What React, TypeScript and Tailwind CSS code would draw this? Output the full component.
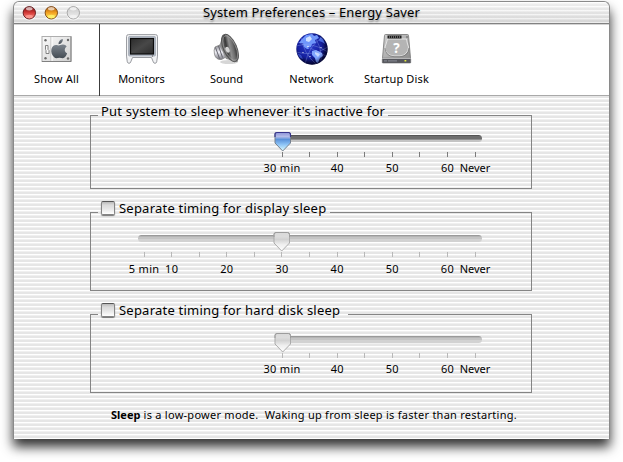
import type { ReactNode } from "react";

function TrafficLight({ id, dark, mid, light, rim }: { id: string; dark: string; mid: string; light: string; rim: string }) {
  return (
    <svg width="15" height="16" viewBox="0 0 15 16" className="block">
      <defs>
        <linearGradient id={id} x1="0" y1="0" x2="0" y2="1">
          <stop offset="0" stopColor={dark} />
          <stop offset="0.5" stopColor={mid} />
          <stop offset="1" stopColor={light} />
        </linearGradient>
      </defs>
      <circle cx="7.3" cy="8.6" r="6.9" fill="#fff" opacity="0.7" />
      <circle cx="7.3" cy="7.8" r="6.2" fill={`url(#${id})`} stroke={rim} strokeWidth="0.9" />
      <ellipse cx="7.3" cy="3.8" rx="3.3" ry="1.7" fill="#fff" opacity="0.65" />
      <ellipse cx="7.3" cy="11.5" rx="3.6" ry="1.7" fill={light} opacity="0.8" />
    </svg>
  );
}

function ShowAllIcon() {
  return (
    <svg width="32" height="34" viewBox="0 0 32 34">
      <defs>
        <linearGradient id="plate" x1="0" y1="0" x2="1" y2="1">
          <stop offset="0" stopColor="#fafafa" />
          <stop offset="1" stopColor="#cfcfcf" />
        </linearGradient>
        <linearGradient id="apple" x1="0" y1="0" x2="0" y2="1">
          <stop offset="0" stopColor="#7d858e" />
          <stop offset="1" stopColor="#434b53" />
        </linearGradient>
      </defs>
      <rect x="1" y="4.5" width="29" height="25" fill="url(#plate)" stroke="#aeaeae" />
      <path d="M1 29.500h29v-25" fill="none" stroke="#808080" />
      <path d="M10 5v24" stroke="#bdbdbd" />
      <path d="M11 5v24" stroke="#fff" />
      <g fill="#6a6a6a">
        <circle cx="4.500" cy="8.200" r="1.200" />
        <circle cx="4.500" cy="26.200" r="1.200" />
        <circle cx="27" cy="8" r="1.200" />
        <circle cx="27" cy="26.500" r="1.200" />
      </g>
      <path d="M4.500 13.500h2.500v4l1 1v3h-3v-3l-.5-1z" fill="#f8f8f8" stroke="#777" strokeWidth="0.9" />
      <g fill="url(#apple)" transform="translate(19.200 17) scale(1.180) translate(-21.600 -15.900)">
        <path d="M20.300 13c1-.1 2.200-1 3.700-.9 1.400.1 2.500.7 3.100 1.600-2.300 1.500-2.100 4.700.4 5.800-.5 1.500-1.300 2.800-2.300 3.700-1.400 1.200-2.500.2-4.200.2-1.700 0-2.900.9-4.300-.3-2-1.700-3.200-4.600-2.500-7.200.6-2.400 2.500-3.700 4.300-3.400.7.100 1.300.4 1.800.5z" />
        <path d="M20.200 11.900c-.2-2.200 1.500-4.100 3.600-4.400.3 2.300-1.500 4.300-3.600 4.400z" />
      </g>
    </svg>
  );
}

function MonitorIcon() {
  return (
    <svg width="34" height="34" viewBox="0 0 34 34">
      <defs>
        <linearGradient id="screen" x1="0" y1="0" x2="1" y2="1">
          <stop offset="0" stopColor="#2b2b2b" />
          <stop offset="0.5" stopColor="#484848" />
          <stop offset="1" stopColor="#2c2c2c" />
        </linearGradient>
      </defs>
      <path
        d="M3.500 2.600h27q2 0 2 2v19.500l-.8 5.800q-.4 1.400-1.700 1.400t-1.700-1.300l-1.800-4.500h-19l-1.800 4.500q-.4 1.300-1.700 1.300t-1.700-1.400l-.8-5.800v-19.500q0-2 2-2z"
        fill="#f1f2f4"
        stroke="#9b9da2"
        strokeWidth="1"
      />
      <rect x="3.500" y="4.500" width="27" height="19.500" rx="1" fill="#bac1cc" stroke="#99a1ac" strokeWidth="0.7" />
      <rect x="5.500" y="6.500" width="23" height="15.500" fill="url(#screen)" stroke="#0c0c0c" strokeWidth="1.200" />
      <circle cx="27.500" cy="24" r=".7" fill="#666" />
    </svg>
  );
}

function SoundIcon() {
  return (
    <svg width="34" height="34" viewBox="0 0 34 34">
      <defs>
        <linearGradient id="cone" x1="0.1" y1="0.2" x2="0.9" y2="0.6">
          <stop offset="0" stopColor="#6b6b6b" />
          <stop offset="0.3" stopColor="#3a3a3a" />
          <stop offset="0.55" stopColor="#8f8f8f" />
          <stop offset="0.8" stopColor="#6c6c6c" />
          <stop offset="1" stopColor="#3c3c3c" />
        </linearGradient>
        <linearGradient id="magnet" x1="0" y1="0" x2="0" y2="1">
          <stop offset="0" stopColor="#77777d" />
          <stop offset="0.5" stopColor="#f3f3fa" />
          <stop offset="1" stopColor="#77777f" />
        </linearGradient>
      </defs>
      <ellipse cx="19" cy="30" rx="9" ry="2" fill="#000" opacity="0.16" />
      <path d="M5 15l6-2.500 5 12.500-4.500 2.500q-5.500.5-7-5-1-4.500.5-7.500z" fill="url(#magnet)" stroke="#777" strokeWidth=".7" />
      <path d="M5.500 15.500l4 11M8.500 14l4 11.500" stroke="#65656d" strokeWidth="1" fill="none" />
      <path d="M9.500 13l3.500-10 15 27-12-3z" fill="#909090" />
      <ellipse cx="20" cy="16" rx="6.600" ry="14.600" transform="rotate(-24 20 16)" fill="url(#cone)" stroke="#555" strokeWidth="1" />
      <ellipse cx="20.200" cy="16" rx="5.600" ry="13.300" transform="rotate(-24 20.200 16)" fill="none" stroke="#adadad" strokeWidth=".6" />
      <ellipse cx="17.500" cy="17.800" rx="2" ry="3" transform="rotate(-24 17.500 17.800)" fill="#d4d4d4" />
    </svg>
  );
}

function NetworkIcon() {
  return (
    <svg width="34" height="34" viewBox="0 0 34 34">
      <defs>
        <radialGradient id="globe" cx="0.42" cy="0.4" r="0.62">
          <stop offset="0" stopColor="#2b3ccc" />
          <stop offset="0.6" stopColor="#1520a0" />
          <stop offset="1" stopColor="#03042e" />
        </radialGradient>
        <radialGradient id="globeShade" cx="0.45" cy="0.42" r="0.58">
          <stop offset="0.7" stopColor="#03042e" stopOpacity="0" />
          <stop offset="1" stopColor="#03042e" stopOpacity="0.6" />
        </radialGradient>
        <clipPath id="globeClip">
          <circle cx="17" cy="17" r="15.500" />
        </clipPath>
      </defs>
      <circle cx="17" cy="17" r="15.700" fill="url(#globe)" />
      <g clipPath="url(#globeClip)">
        <path d="M7 7l4-4 6-1 2 2 3-1 2 3-4 2 1 3-4 1-1 3-3 0 1 2-2 0-3-2-1-4-4 0z" fill="#6f96fb" />
        <path d="M11 6l4-2 2 3-3 3-3-1z" fill="#cfe0ff" />
        <path d="M17 19l4-1 6 3 1 3-3 2-2 5-2-1-1-4-3-3z" fill="#7ea4ff" />
        <path d="M20 20l3 1 2 1-2 3-3-3z" fill="#c6d9ff" />
        <path d="M25 5l3 2 2 5-3-2-3-1z" fill="#4767dd" />
        <path d="M2 21l4 2 2 4-3-1z" fill="#364fd2" />
        <g fill="none" stroke="#9db3f4" strokeWidth=".5" opacity=".65">
          <path d="M1 14q15-5 32 6M1 20q16 5 32-5M6 5q2 16 16 28M28 5q-14 8-18 27M3 10l28 14M16 1q12 12 10 30" />
        </g>
        <g fill="#fff">
          <circle cx="13" cy="14.500" r=".7" />
          <circle cx="26" cy="15.500" r=".6" />
          <circle cx="8" cy="20.500" r=".6" />
          <circle cx="15" cy="24.500" r=".6" />
        </g>
        <circle cx="17" cy="17" r="16" fill="url(#globeShade)" />
      </g>
    </svg>
  );
}

function DiskIcon() {
  return (
    <svg width="34" height="34" viewBox="0 0 34 34">
      <defs>
        <linearGradient id="disk" x1="0" y1="0" x2="1" y2="1">
          <stop offset="0" stopColor="#d0d0d0" />
          <stop offset="0.5" stopColor="#b2b2b2" />
          <stop offset="1" stopColor="#8d8d8d" />
        </linearGradient>
      </defs>
      <path d="M4.500 3.500q0-1 1-1h22q1 0 1 1l2 22.500h-28z" fill="url(#disk)" stroke="#808080" strokeWidth=".9" />
      <path d="M7.500 7q-1 4-2.500 8 0 8 9 9h6q8-1 8.500-9-1.500-4-2-8z" fill="#b4b4b4" stroke="#e4e4e4" strokeWidth="1" />
      <path d="M5 16q.5 8 9 8.700h6q8.500-.7 9-8.700" fill="none" stroke="#707070" strokeWidth=".7" />
      <rect x="7.500" y="3.500" width="14" height="3" fill="#1d1d1d" />
      <path d="M9 5h11" stroke="#aaa" strokeDasharray="1 1" />
      <rect x="2.300" y="26.500" width="28.400" height="4.500" rx=".6" fill="#55565c" stroke="#66666a" strokeWidth=".6" />
      <path d="M4 28.800h3M8 28.800h9" stroke="#80828a" strokeWidth="1.300" />
      <path d="M2.500 26.300h28" stroke="#c6c6c6" strokeWidth="1" />
      <rect x="24.500" y="28" width="1.800" height="1.500" fill="#e1ea3c" />
      <circle cx="27" cy="5" r=".8" fill="#555" />
      <text x="16.500" y="21" textAnchor="middle" fontSize="13.500" fontWeight="700" fill="#fff" fontFamily="Noto Sans, sans-serif">
        ?
      </text>
    </svg>
  );
}

function ToolItem({ label, spacing, active, children }: { label: string; spacing: string; active?: boolean; children: ReactNode }) {
  return (
    <div className={`flex h-[72px] flex-col items-center pt-[8px] ${active ? "-mr-px w-[86px] border-r border-[#3c3c3c]" : "w-[85px]"}`}>
      <div className="flex h-[34px] items-center justify-center">{children}</div>
      <span className={`mt-[5px] whitespace-nowrap text-[11px] leading-4 ${spacing}`}>{label}</span>
    </div>
  );
}

function Thumb({ active, id }: { active?: boolean; id: string }) {
  return (
    <svg width="18" height="21" viewBox="0 0 18 21" className="absolute -top-[4px] left-[-9px]">
      <defs>
        <linearGradient id={id} x1="0" y1="0" x2="0" y2="1">
          <stop offset="0" stopColor={active ? "#8d93d8" : "#dadada"} />
          <stop offset="0.22" stopColor={active ? "#b3bbe8" : "#dcdcdc"} />
          <stop offset="0.38" stopColor={active ? "#5a92da" : "#d2d2d2"} />
          <stop offset="0.65" stopColor={active ? "#8ec4f6" : "#efefef"} />
          <stop offset="1" stopColor={active ? "#e0ffff" : "#ffffff"} />
        </linearGradient>
      </defs>
      <path d="M3 1.500h11.500q2 0 2 2v8.500l-7.800 8-7.700-8v-8.500q0-2 2-2z" fill={`url(#${id})`} stroke={active ? "#75808f" : "#ababab"} strokeWidth="1" />
      <path d="M1 6v-2.500q0-2 2-2h11.500q2 0 2 2v2.500" fill="none" stroke={active ? "#37348c" : "#9c9c9c"} strokeWidth={active ? 1.200 : 1} />
    </svg>
  );
}

type Tick = { label?: string };

const shortScale: Tick[] = [{ label: "30 min" }, {}, { label: "40" }, {}, { label: "50" }, {}, { label: "60" }, { label: "Never" }];
const longScale: Tick[] = [{ label: "5 min" }, { label: "10" }, {}, { label: "20" }, {}, { label: "30" }, {}, { label: "40" }, {}, { label: "50" }, {}, { label: "60" }, { label: "Never" }];

function Slider({ ticks, active, id, thumb, inset, labelGap }: { ticks: Tick[]; active?: boolean; id: string; thumb: string; inset: string; labelGap: string }) {
  return (
    <>
      <div
        className={`relative h-[7px] rounded-full ${
          active
            ? "bg-[linear-gradient(#555_0_1px,#6e6e6e_1px_4px,#909090_4px_5px,#c4c4c4_5px)]"
            : "bg-[linear-gradient(#9a9a9a_0_1px,#b4b4b4_1px_2px,#c4c4c4_2px_4px,#d2d2d2_4px)]"
        }`}
      >
        <div className={`absolute top-0 h-0 w-0 ${thumb}`}>
          <Thumb active={active} id={id} />
        </div>
      </div>
      <div className={`mt-[10px] mr-[6.400px] flex justify-between ${inset}`}>
        {ticks.map((t, i) => (
          <div key={i} className="flex w-px flex-col items-center">
            <div className={`h-[5px] w-px ${active ? "bg-[#7c7c7c]" : "bg-[#b8b8b8]"}`} />
            {t.label && (
              <span className={`whitespace-nowrap text-[11px] leading-4 ${labelGap} ${t.label === "Never" ? "" : "tracking-[0.3px]"}`}>{t.label}</span>
            )}
          </div>
        ))}
      </div>
    </>
  );
}

function Checkbox() {
  return (
    <div className="h-[14px] w-[14px] rounded-[2px] border border-[#858585] border-t-[#555] bg-[linear-gradient(#b9b9b9,#dadada_25%,#e6e6e6_55%,#fff)] shadow-[0_1px_1px_rgba(0,0,0,.5)]" />
  );
}

function Group({ title, titleWidth, checkbox, className, children }: { title: string; titleWidth: string; checkbox?: boolean; className: string; children: ReactNode }) {
  return (
    <section className={`w-[442px] border-x border-b border-[#858585] ${className}`}>
      <header className="flex h-px items-start">
        <div className="h-px w-[7px] bg-[#858585]" />
        <div className={`-mt-[13px] flex h-[18px] items-center pl-[3px] ${titleWidth}`}>
          {checkbox && <Checkbox />}
          <span className={`whitespace-nowrap text-[13px] leading-[18px] tracking-[0.22px] ${checkbox ? "ml-[4px]" : ""}`}>{title}</span>
        </div>
        <div className="h-px flex-1 bg-[#858585]" />
      </header>
      {children}
    </section>
  );
}

export default function App() {
  return (
    <div className="h-[462px] w-[623px] overflow-hidden bg-white pt-px pl-[13px] font-['Noto_Sans','Liberation_Sans',sans-serif] text-black">
      <div className="h-[438px] w-[597px] rounded-t-[6px] shadow-[0_8px_12px_rgba(0,0,0,.8)]">
        <div className="flex h-full flex-col overflow-hidden rounded-t-[6px] border-x border-t border-[#8a8a8a] bg-[repeating-linear-gradient(#fff_0_1px,#f0f0f0_1px_2px,#e6e6e6_2px_4px)]">
          <div className="grid h-[22px] grid-cols-[1fr_auto_1fr] items-center border-b border-[#828282] bg-[linear-gradient(rgba(255,255,255,.4),rgba(0,0,0,.07))]">
            <div className="flex gap-[7px] pl-[8px]">
              <TrafficLight id="close" dark="#6d0d10" mid="#d63b38" light="#ff9c93" rim="#591215" />
              <TrafficLight id="minimize" dark="#a3500a" mid="#f4a322" light="#fff56d" rim="#733e0b" />
              <TrafficLight id="zoom" dark="#c9c9c9" mid="#dddddd" light="#f4f4f4" rim="#9d9d9d" />
            </div>
            <h1 className="mb-[2px] whitespace-nowrap text-[13px] leading-[18px] tracking-[0.13px] [text-shadow:0_2px_2px_rgba(0,0,0,.35)]">
              System Preferences – Energy Saver
            </h1>
            <div />
          </div>
          <nav className="flex h-[72px] border-b border-[#a9a9a9] bg-white shadow-[inset_0_1px_#d4d4d4]">
            <ToolItem label="Show All" spacing="tracking-[0.2px]" active>
              <ShowAllIcon />
            </ToolItem>
            <ToolItem label="Monitors" spacing="">
              <MonitorIcon />
            </ToolItem>
            <ToolItem label="Sound" spacing="">
              <SoundIcon />
            </ToolItem>
            <ToolItem label="Network" spacing="">
              <NetworkIcon />
            </ToolItem>
            <ToolItem label="Startup Disk" spacing="tracking-[0.16px]">
              <DiskIcon />
            </ToolItem>
          </nav>
          <main className="flex-1 pt-[19px] pl-[76px]">
            <Group title="Put system to sleep whenever it's inactive for" titleWidth="w-[290px]" className="h-[74px]">
              <div className="ml-[184px] w-[207px] pt-[19px]">
                <Slider ticks={shortScale} active id="systemThumb" thumb="left-[8px]" inset="ml-[6.600px]" labelGap="mt-[3px]" />
              </div>
            </Group>
            <Group title="Separate timing for display sleep" titleWidth="w-[232px]" checkbox className="mt-[23px] h-[79px]">
              <div className="ml-[47px] w-[344px] pt-[22px]">
                <Slider ticks={longScale} id="displayThumb" thumb="left-[144px]" inset="ml-[5.600px]" labelGap="mt-[4px]" />
              </div>
            </Group>
            <Group title="Separate timing for hard disk sleep" titleWidth="w-[250px]" checkbox className="mt-[23px] h-[79px]">
              <div className="ml-[184px] w-[207px] pt-[21px]">
                <Slider ticks={shortScale} id="diskThumb" thumb="left-[8px]" inset="ml-[6.600px]" labelGap="mt-[3px]" />
              </div>
            </Group>
            <p className="mt-[14px] ml-[21px] text-[11px] leading-4 whitespace-pre">
              <b>Sleep</b>
              <span className="tracking-[0.26px]">{" is a low-power mode.  Waking up from sleep is faster than restarting."}</span>
            </p>
          </main>
        </div>
      </div>
    </div>
  );
}
